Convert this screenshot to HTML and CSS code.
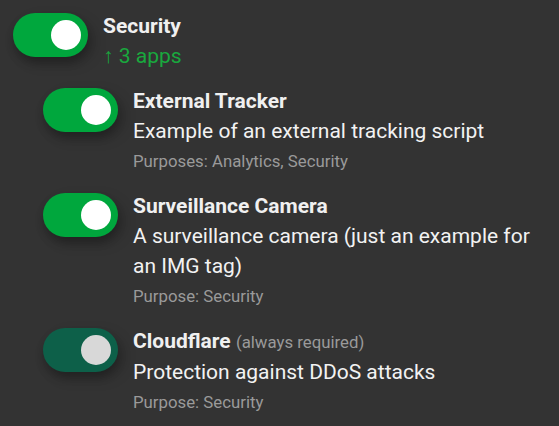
FILE: index.html
```html
<!DOCTYPE html>
<html>
<head>
<meta charset="utf-8">
<link rel="stylesheet" href="styles.css">
</head>
<body>
<div class="list">
  <div class="item top">
    <span class="switch on"><span class="knob"></span></span>
    <div class="text">
      <div class="title">Security</div>
      <div class="apps">↑ 3 apps</div>
    </div>
  </div>
  <div class="sub">
    <div class="item">
      <span class="switch on"><span class="knob"></span></span>
      <div class="text">
        <div class="title">External Tracker</div>
        <div class="desc">Example of an external tracking script</div>
        <div class="purposes">Purposes: Analytics, Security</div>
      </div>
    </div>
    <div class="item">
      <span class="switch on"><span class="knob"></span></span>
      <div class="text">
        <div class="title">Surveillance Camera</div>
        <div class="desc">A surveillance camera (just an example for an IMG tag)</div>
        <div class="purposes">Purpose: Security</div>
      </div>
    </div>
    <div class="item">
      <span class="switch required"><span class="knob"></span></span>
      <div class="text">
        <div class="title">Cloudflare <span class="req">(always required)</span></div>
        <div class="desc">Protection against DDoS attacks</div>
        <div class="purposes">Purpose: Security</div>
      </div>
    </div>
  </div>
</div>
</body>
</html>
```
FILE: styles.css
```css
html, body {
  margin: 0;
  padding: 0;
  background: #333333;
  width: 559px;
  height: 426px;
  overflow: hidden;
}
body {
  font-family: Roboto, "Liberation Sans", sans-serif;
  color: #f2f2f2;
}
.list {
  padding: 11px 14px 0 13px;
  display: flex;
  flex-direction: column;
  gap: 15px;
}
.sub {
  padding-left: 30px;
  display: flex;
  flex-direction: column;
  gap: 15px;
}
.item {
  display: flex;
  align-items: flex-start;
  gap: 15px;
}
.switch {
  flex: none;
  position: relative;
  width: 75px;
  height: 44px;
  border-radius: 22px;
  margin-top: 2px;
  box-shadow: 0 6px 9px 0 rgba(0,0,0,0.2), 6px 6px 14px 0 rgba(0,0,0,0.19);
}
.switch.on { background: #00a73d; }
.switch.required { background: #0d6049; }
.knob {
  position: absolute;
  left: 38px;
  top: 7px;
  width: 30px;
  height: 30px;
  border-radius: 50%;
  background: #ffffff;
}
.required .knob { background: #d8d8d8; }
.text {
  line-height: 30px;
  flex: 1;
}
.title {
  font-weight: 700;
  font-size: 21px;
  color: #f0f0f0;
}
.apps {
  font-size: 21px;
  color: #19a83e;
}
.desc {
  font-size: 21px;
  color: #f2f2f2;
}
.purposes {
  font-size: 16.8px;
  color: #9a9a9a;
}
.req {
  font-weight: 400;
  font-size: 16.8px;
  color: #9a9a9a;
}
```
